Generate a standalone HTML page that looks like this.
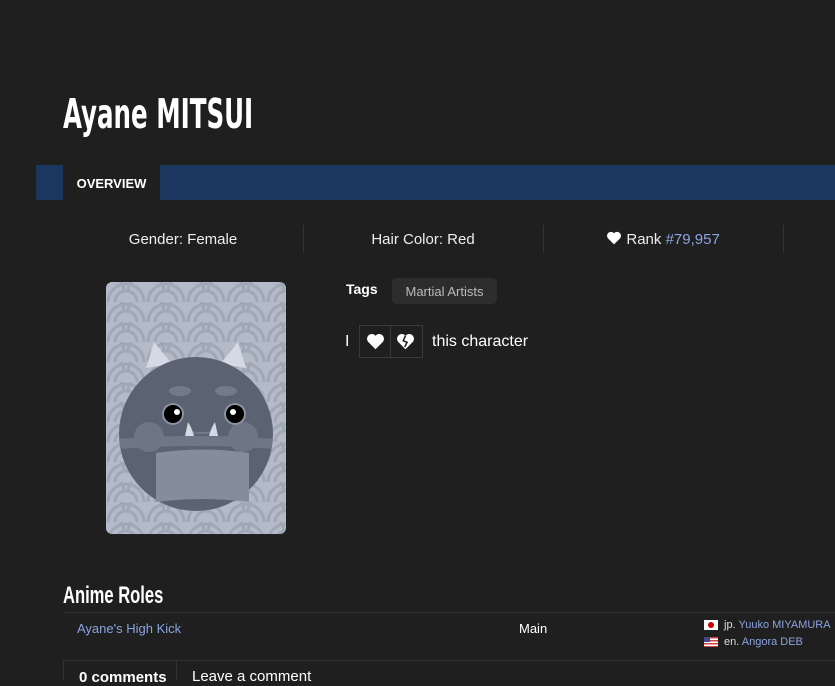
<!DOCTYPE html>
<html><head><meta charset="utf-8"><style>
*{margin:0;padding:0;box-sizing:border-box}
body{width:835px;height:676px;background:#1f1f1f;color:#eee;font-family:"Liberation Sans",sans-serif;overflow:hidden;position:relative}
.a{position:absolute}
h1{position:absolute;left:63px;top:90px;font-family:"Liberation Sans Narrow","DejaVu Sans Condensed","Liberation Sans",sans-serif;font-weight:bold;font-size:41px;color:#fff;transform:scaleX(0.665);transform-origin:left;white-space:nowrap}
.nav{left:36px;top:165px;width:799px;height:35px;background:#1b365f}
.tab{left:63px;top:165px;width:97px;height:35px;background:#1f1f1f;font-size:13px;font-weight:bold;color:#fff;text-align:center;line-height:37px}
.st{top:225px;height:28px;width:240px;text-align:center;font-size:15px;line-height:30px;color:#eee}
.dv{top:225px;width:1px;height:28px;background:#333}
.blue{color:#8aa4e0}
.h2{left:63px;top:582px;font-size:24px;font-weight:bold;color:#fff;font-family:"Liberation Sans Narrow","Liberation Sans",sans-serif;transform:scaleX(0.69);transform-origin:left;white-space:nowrap}
.ln{height:1px;background:#333}
</style></head><body>
<h1>Ayane MITSUI</h1>
<div class="a nav"></div>
<div class="a tab">OVERVIEW</div>
<div class="a st" style="left:63px">Gender: Female</div>
<div class="a dv" style="left:303px"></div>
<div class="a st" style="left:303px">Hair Color: Red</div>
<div class="a dv" style="left:543px"></div>
<div class="a st" style="left:543px"><svg width="16" height="14" viewBox="0 0 24 22" style="vertical-align:-1px"><path d="M12 21 L2.5 11.5 A5.5 5.5 0 0 1 12 3.5 A5.5 5.5 0 0 1 21.5 11.5 Z" fill="#fff"/></svg> Rank <span class="blue">#79,957</span></div>
<div class="a dv" style="left:783px"></div>

<svg class="a" style="left:106px;top:282px" width="180" height="252" viewBox="0 0 180 252">
<defs><pattern id="p" width="40" height="20" patternUnits="userSpaceOnUse">
<rect width="40" height="20" fill="#b4bbc8"/>
<g fill="none" stroke="#a0a8b6" stroke-width="3"><path d="M2 20 A18 18 0 0 1 38 20 M9 20 A11 11 0 0 1 31 20 M-18 10 A18 18 0 0 1 18 10 M22 10 A18 18 0 0 1 58 10"/></g>
</pattern><clipPath id="c"><circle cx="90" cy="152" r="77"/></clipPath></defs>
<rect width="180" height="252" rx="6" fill="url(#p)"/>
<path d="M40 86 L48 60 Q56 70 66 82 Z" fill="#d5d9e4"/>
<path d="M140 86 L132 60 Q124 70 114 82 Z" fill="#d5d9e4"/>
<circle cx="90" cy="152" r="77" fill="#5b6271"/>
<g clip-path="url(#c)"><path d="M0 158 Q90 150 180 158 L180 168 Q90 160 0 168 Z" fill="#6f7685"/></g>
<circle cx="43" cy="155" r="15" fill="#6e7584"/><circle cx="137" cy="155" r="15" fill="#6e7584"/>
<path d="M50 171 Q96 164 143 171 L143 220 Q96 214 50 220 Z" fill="#858c9a"/>
<ellipse cx="74" cy="109" rx="11" ry="5" fill="#737a89"/><ellipse cx="120" cy="109" rx="11" ry="5" fill="#737a89"/>
<circle cx="67" cy="132" r="11" fill="#8a91a0"/><circle cx="67" cy="132" r="9" fill="#000"/><circle cx="71" cy="130" r="3" fill="#fff"/>
<circle cx="129" cy="132" r="11" fill="#8a91a0"/><circle cx="129" cy="132" r="9" fill="#000"/><circle cx="127" cy="130" r="3" fill="#fff"/>
<path d="M82 150 Q96 152 108 150" stroke="#737a89" stroke-width="2" fill="none"/>
<path d="M79 154 L82 140 Q86 146 88 154 Z M103 154 Q105 146 109 140 L112 154 Z" fill="#d5d9e4"/>
</svg>

<div class="a" style="left:346px;top:281px;font-size:14px;font-weight:bold;color:#fff">Tags</div>
<div class="a" style="left:392px;top:278px;width:105px;height:26px;background:#2d2d2d;border-radius:5px;font-size:13px;color:#bbb;text-align:center;line-height:27px">Martial Artists</div>
<div class="a" style="left:345px;top:333px;font-size:16px;color:#fff">I</div>
<div class="a" style="left:359px;top:325px;width:64px;height:33px;border:1px solid #3a3a3a"></div>
<div class="a" style="left:390px;top:325px;width:1px;height:33px;background:#3a3a3a"></div>
<svg class="a" style="left:366px;top:333px" width="19" height="17" viewBox="0 0 24 22"><path d="M12 21 L2.5 11.5 A5.5 5.5 0 0 1 12 3.5 A5.5 5.5 0 0 1 21.5 11.5 Z" fill="#fff"/></svg>
<svg class="a" style="left:396px;top:333px" width="19" height="17" viewBox="0 0 24 22"><path d="M12 21 L2.5 11.5 A5.5 5.5 0 0 1 12 3.5 A5.5 5.5 0 0 1 21.5 11.5 Z" fill="#fff"/><path d="M12 3.5 L9 10 L14 12 L11 18" stroke="#1f1f1f" stroke-width="2" fill="none"/></svg>
<div class="a" style="left:432px;top:333px;font-size:16px;color:#fff">this character</div>

<div class="a h2">Anime Roles</div>
<div class="a ln" style="left:63px;top:612px;width:772px"></div>
<div class="a" style="left:77px;top:621px;font-size:13px;color:#8aa4e0">Ayane's High Kick</div>
<div class="a" style="left:519px;top:621px;font-size:13px;color:#fff">Main</div>
<div class="a" style="left:704px;top:620px;width:14px;height:10px;background:#fff"><div style="margin:2px auto;width:6px;height:6px;border-radius:50%;background:#c00"></div></div>
<div class="a" style="left:724px;top:619px;font-size:11px;color:#ddd">jp. <span class="blue">Yuuko MIYAMURA</span></div>
<div class="a" style="left:704px;top:637px;width:14px;height:10px;background:repeating-linear-gradient(#c44 0 1.5px,#fff 1.5px 3px)"><div style="width:6px;height:5px;background:#448"></div></div>
<div class="a" style="left:724px;top:636px;font-size:11px;color:#ddd">en. <span class="blue">Angora DEB</span></div>
<div class="a ln" style="left:63px;top:660px;width:772px"></div>
<div class="a" style="left:63px;top:660px;width:114px;height:20px;border:1px solid #333;border-bottom:none;font-size:15px;font-weight:bold;color:#fff;padding:8px 0 0 15px">0 comments</div>
<div class="a" style="left:192px;top:668px;font-size:15px;color:#fff">Leave a comment</div>
</body></html>
